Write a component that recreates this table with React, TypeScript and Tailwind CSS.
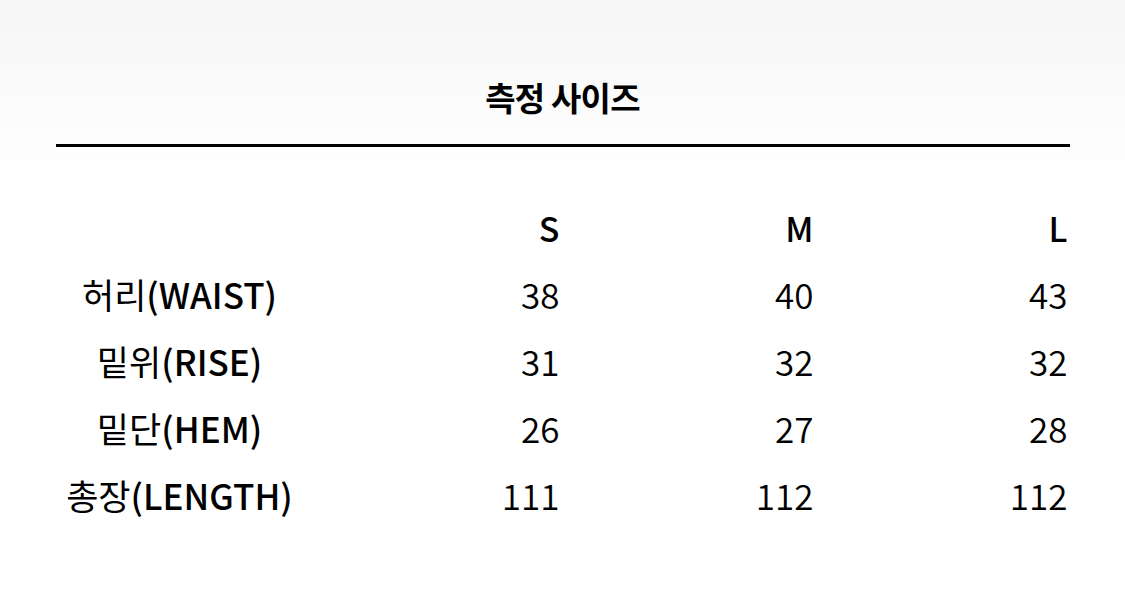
const rows = [
  { ko: "허리", en: "WAIST", s: "38", m: "40", l: "43" },
  { ko: "밑위", en: "RISE", s: "31", m: "32", l: "32" },
  { ko: "밑단", en: "HEM", s: "26", m: "27", l: "28" },
  { ko: "총장", en: "LENGTH", s: "111", m: "112", l: "112" },
];

export default function App() {
  return (
    <div
      className="w-[1125px] h-[607px] bg-gradient-to-b from-[#f6f6f6] to-white to-[30%] text-black"
      style={{ fontFamily: '"Noto Sans CJK KR", "Noto Sans", sans-serif' }}
    >
      <div className="mx-auto w-[1014px] pt-[75px]">
        <h1 className="text-center text-[33px] leading-[44px] font-bold tracking-tight">측정 사이즈</h1>
        <div className="mt-[25px] h-[3px] bg-black" />

        <div className="mt-[47px] grid grid-cols-[248px_256px_254px_254px] text-[35px] auto-rows-[67px] items-center">
          <div />
          <div className="text-right font-medium text-[34px]">S</div>
          <div className="text-right font-medium text-[34px]">M</div>
          <div className="text-right font-medium text-[34px]">L</div>

          {rows.map((r) => (
            <div key={r.en} className="contents">
              <div className="text-center whitespace-nowrap">
                {r.ko}
                <span className="font-medium">({r.en})</span>
              </div>
              <div className="text-right proportional-nums font-[350]">{r.s}</div>
              <div className="text-right proportional-nums font-[350]">{r.m}</div>
              <div className="text-right proportional-nums font-[350]">{r.l}</div>
            </div>
          ))}
        </div>
      </div>
    </div>
  );
}
